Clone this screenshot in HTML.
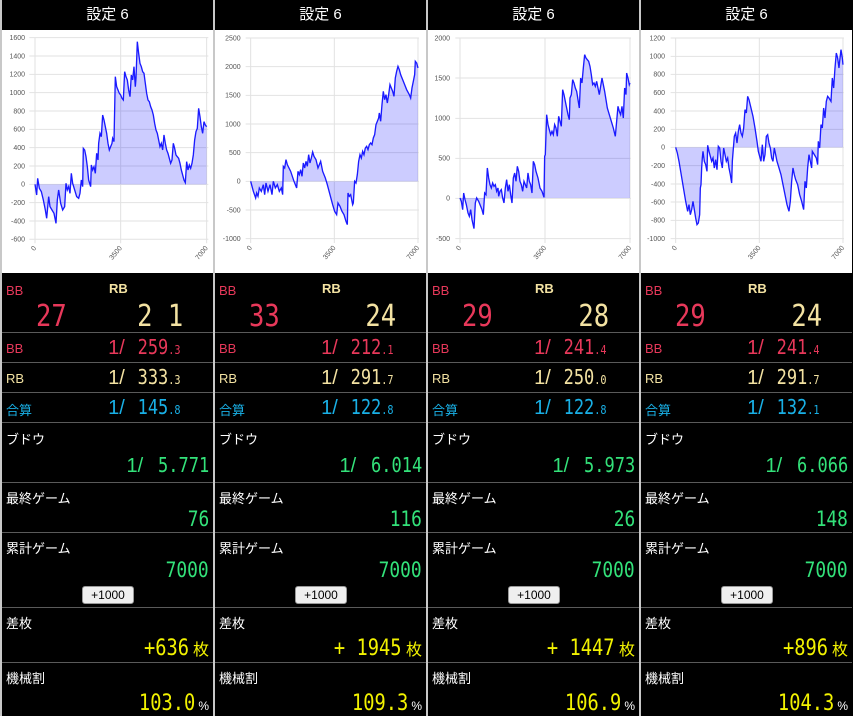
<!DOCTYPE html>
<html><head><meta charset="utf-8"><style>
*{margin:0;padding:0;box-sizing:border-box}
body{width:853px;height:716px;background:#c8c8c8;position:relative;overflow:hidden;font-family:"Liberation Sans","Noto Sans CJK JP",sans-serif}
.col{position:absolute;top:0;width:211px;height:716px;background:#000;color:#fff}
.hd{position:absolute;top:0;left:0;width:211px;height:30px;line-height:30px;text-align:center;font-size:15px}
svg.ch{position:absolute;top:30px;left:0;width:211px;height:243px;background:#fff}
.r{position:absolute;left:0;width:211px;border-top:1px solid #5a5a5a}
.lb{position:absolute;left:4px;font-size:13px}
.d{font-family:"DejaVu Sans Mono","Liberation Mono",monospace;display:inline-block;transform:scaleX(.85);transform-origin:right}
.v{position:absolute;right:4px;white-space:nowrap}
.red{color:#e8385a}.bei{color:#f3e2a2}.cy{color:#19b0e6}.gr{color:#33e27a}.ye{color:#f2f200}
.btn{position:absolute;left:80px;width:52px;height:18px;background:#efefef;border:1px solid #999;border-radius:3px;color:#000;font-size:12px;text-align:center;line-height:16px}
</style></head><body>

<!-- Column template builder -->
<div class="col" style="left:2px">
<div class="hd">設定 6</div>
<svg class="ch" viewBox="2 30 211 243">
<g transform="translate(0,0) scale(0.3333)" font-family="Liberation Sans,sans-serif" font-size="21" fill="#555">
<g stroke="#e2e2e2" stroke-width="3">
<line x1="88" x2="625" y1="113" y2="113"/><line x1="88" x2="625" y1="168" y2="168"/><line x1="88" x2="625" y1="223" y2="223"/><line x1="88" x2="625" y1="278" y2="278"/><line x1="88" x2="625" y1="333" y2="333"/><line x1="88" x2="625" y1="388" y2="388"/><line x1="88" x2="625" y1="443" y2="443"/><line x1="88" x2="625" y1="498" y2="498"/><line x1="88" x2="625" y1="553" y2="553"/><line x1="88" x2="625" y1="608" y2="608"/><line x1="88" x2="625" y1="663" y2="663"/><line x1="88" x2="625" y1="718" y2="718"/>
<line x1="105" x2="105" y1="113" y2="730"/><line x1="362" x2="362" y1="113" y2="730"/><line x1="620" x2="620" y1="113" y2="730"/></g>
<g text-anchor="end"><text x="75" y="120">1600</text><text x="75" y="175">1400</text><text x="75" y="230">1200</text><text x="75" y="285">1000</text><text x="75" y="340">800</text><text x="75" y="395">600</text><text x="75" y="450">400</text><text x="75" y="505">200</text><text x="75" y="560">0</text><text x="75" y="615">-200</text><text x="75" y="670">-400</text><text x="75" y="725">-600</text>
<text transform="translate(110,745) rotate(-50)">0</text><text transform="translate(367,745) rotate(-50)">3500</text><text transform="translate(625,745) rotate(-50)">7000</text></g>
<polygon fill="rgba(0,0,255,0.2)" points="105,553 110,585 113,535 118,565 124,575 130,600 136,630 140,655 146,590 150,620 156,630 162,640 168,670 172,600 176,570 182,610 188,630 194,620 198,550 202,570 206,560 210,580 214,520 218,550 224,570 230,590 236,595 240,580 244,540 248,560 250,445 254,450 258,470 262,500 266,540 272,560 274,495 278,510 282,500 286,520 290,460 294,480 296,430 300,400 304,410 308,345 312,360 316,380 320,400 324,430 328,450 332,440 336,430 338,415 342,425 346,230 350,260 354,270 358,280 362,285 366,295 370,300 374,215 378,230 382,240 386,270 390,290 394,225 398,240 402,200 406,260 408,235 412,125 416,160 420,190 424,200 428,215 432,220 436,250 440,280 444,300 448,305 452,320 456,330 460,345 464,370 468,390 472,400 476,420 480,440 484,430 488,450 492,405 496,430 500,450 504,460 508,475 512,490 516,480 520,430 524,445 528,465 532,470 536,475 540,490 544,510 548,525 552,540 556,548 560,485 564,510 568,495 572,505 576,490 580,465 584,420 588,395 592,385 596,325 600,350 604,380 608,400 612,365 616,375 620,380 620,553"/>
<polyline fill="none" stroke="#1a1aff" stroke-width="4" points="105,553 110,585 113,535 118,565 124,575 130,600 136,630 140,655 146,590 150,620 156,630 162,640 168,670 172,600 176,570 182,610 188,630 194,620 198,550 202,570 206,560 210,580 214,520 218,550 224,570 230,590 236,595 240,580 244,540 248,560 250,445 254,450 258,470 262,500 266,540 272,560 274,495 278,510 282,500 286,520 290,460 294,480 296,430 300,400 304,410 308,345 312,360 316,380 320,400 324,430 328,450 332,440 336,430 338,415 342,425 346,230 350,260 354,270 358,280 362,285 366,295 370,300 374,215 378,230 382,240 386,270 390,290 394,225 398,240 402,200 406,260 408,235 412,125 416,160 420,190 424,200 428,215 432,220 436,250 440,280 444,300 448,305 452,320 456,330 460,345 464,370 468,390 472,400 476,420 480,440 484,430 488,450 492,405 496,430 500,450 504,460 508,475 512,490 516,480 520,430 524,445 528,465 532,470 536,475 540,490 544,510 548,525 552,540 556,548 560,485 564,510 568,495 572,505 576,490 580,465 584,420 588,395 592,385 596,325 600,350 604,380 608,400 612,365 616,375 620,380"/>
</g></svg>
<div class="r" style="top:273px;height:59px;border-top:none"><span class="lb red" style="top:10px">BB</span><span class="lb bei" style="top:8px;left:107px;font-weight:bold">RB</span>
<span class="v red" style="left:34px;right:auto;top:26px;font-size:30px"><span class="d" style="transform-origin:left">27</span></span><span class="v bei" style="right:30px;top:26px;font-size:30px"><span class="d">2 1</span></span></div>
<div class="r" style="top:332px;height:30px"><span class="lb red" style="top:8px">BB</span><span class="v red" style="right:32px;top:2px;font-size:20px">1/ <span class="d">259<small style="font-size:12px">.3</small></span></span></div>
<div class="r bei" style="top:362px;height:30px"><span class="lb" style="top:8px">RB</span><span class="v" style="right:32px;top:2px;font-size:20px">1/ <span class="d">333<small style="font-size:12px">.3</small></span></span></div>
<div class="r cy" style="top:392px;height:30px"><span class="lb" style="top:7px">合算</span><span class="v" style="right:32px;top:2px;font-size:20px">1/ <span class="d">145<small style="font-size:12px">.8</small></span></span></div>
<div class="r" style="top:422px;height:60px"><span class="lb" style="top:6px">ブドウ</span><span class="v gr" style="top:30px;font-size:20px">1/ <span class="d">5.771</span></span></div>
<div class="r" style="top:482px;height:50px"><span class="lb" style="top:5px">最終ゲーム</span><span class="v gr" style="top:24px;font-size:21px"><span class="d">76</span></span></div>
<div class="r" style="top:532px;height:75px"><span class="lb" style="top:5px">累計ゲーム</span><span class="v gr" style="top:25px;font-size:21px"><span class="d">7000</span></span><div class="btn" style="top:53px">+1000</div></div>
<div class="r" style="top:607px;height:55px"><span class="lb" style="top:5px">差枚</span><span class="v ye" style="top:27px;font-size:22px"><span class="d">+636</span><span style="font-size:16px"> 枚</span></span></div>
<div class="r" style="top:662px;height:54px"><span class="lb" style="top:5px">機械割</span><span class="v ye" style="top:27px;font-size:22px"><span class="d">103.0</span><span style="font-size:12px;color:#fff"> %</span></span></div>
</div>

<div class="col" style="left:215px">
<div class="hd">設定 6</div>
<svg class="ch" viewBox="215 30 211 243">
<g transform="translate(214,28) scale(0.3333)" font-family="Liberation Sans,sans-serif" font-size="21" fill="#555">
<g stroke="#e2e2e2" stroke-width="3">
<line x1="95" x2="615" y1="30" y2="30"/><line x1="95" x2="615" y1="116" y2="116"/><line x1="95" x2="615" y1="202" y2="202"/><line x1="95" x2="615" y1="288" y2="288"/><line x1="95" x2="615" y1="374" y2="374"/><line x1="95" x2="615" y1="460" y2="460"/><line x1="95" x2="615" y1="546" y2="546"/><line x1="95" x2="615" y1="632" y2="632"/>
<line x1="110" x2="110" y1="30" y2="645"/><line x1="361" x2="361" y1="30" y2="645"/><line x1="612" x2="612" y1="30" y2="645"/></g>
<g text-anchor="end"><text x="80" y="37">2500</text><text x="80" y="123">2000</text><text x="80" y="209">1500</text><text x="80" y="295">1000</text><text x="80" y="381">500</text><text x="80" y="467">0</text><text x="80" y="553">-500</text><text x="80" y="639">-1000</text>
<text transform="translate(115,660) rotate(-50)">0</text><text transform="translate(366,660) rotate(-50)">3500</text><text transform="translate(617,660) rotate(-50)">7000</text></g>
<polygon fill="rgba(0,0,255,0.2)" points="110,460 118,490 125,510 128,495 132,505 136,480 142,490 148,470 152,500 156,465 162,490 168,470 174,500 178,460 184,480 190,470 196,490 202,480 206,500 208,415 212,420 216,395 220,410 230,430 240,460 248,480 252,430 256,440 260,425 264,445 268,405 272,420 276,400 280,415 284,380 288,405 292,390 296,372 300,385 306,395 312,420 316,410 320,400 326,430 334,450 340,470 348,500 356,530 362,550 368,560 372,525 378,535 384,550 390,560 396,580 400,590 402,495 406,505 410,500 416,530 418,525 422,460 426,465 430,440 434,400 438,380 442,390 446,370 450,380 454,360 458,355 462,365 466,350 470,345 474,350 478,330 482,320 486,290 490,280 494,270 496,255 500,280 504,230 508,190 512,215 516,200 520,225 524,200 528,170 532,180 536,190 540,205 544,150 548,130 552,115 556,125 560,140 566,155 572,170 578,185 586,200 590,210 594,180 598,160 602,140 604,100 608,105 612,120 612,460"/>
<polyline fill="none" stroke="#1a1aff" stroke-width="4" points="110,460 118,490 125,510 128,495 132,505 136,480 142,490 148,470 152,500 156,465 162,490 168,470 174,500 178,460 184,480 190,470 196,490 202,480 206,500 208,415 212,420 216,395 220,410 230,430 240,460 248,480 252,430 256,440 260,425 264,445 268,405 272,420 276,400 280,415 284,380 288,405 292,390 296,372 300,385 306,395 312,420 316,410 320,400 326,430 334,450 340,470 348,500 356,530 362,550 368,560 372,525 378,535 384,550 390,560 396,580 400,590 402,495 406,505 410,500 416,530 418,525 422,460 426,465 430,440 434,400 438,380 442,390 446,370 450,380 454,360 458,355 462,365 466,350 470,345 474,350 478,330 482,320 486,290 490,280 494,270 496,255 500,280 504,230 508,190 512,215 516,200 520,225 524,200 528,170 532,180 536,190 540,205 544,150 548,130 552,115 556,125 560,140 566,155 572,170 578,185 586,200 590,210 594,180 598,160 602,140 604,100 608,105 612,120"/>
</g></svg>
<div class="r" style="top:273px;height:59px;border-top:none"><span class="lb red" style="top:10px">BB</span><span class="lb bei" style="top:8px;left:107px;font-weight:bold">RB</span>
<span class="v red" style="left:34px;right:auto;top:26px;font-size:30px"><span class="d" style="transform-origin:left">33</span></span><span class="v bei" style="right:30px;top:26px;font-size:30px"><span class="d">24</span></span></div>
<div class="r" style="top:332px;height:30px"><span class="lb red" style="top:8px">BB</span><span class="v red" style="right:32px;top:2px;font-size:20px">1/ <span class="d">212<small style="font-size:12px">.1</small></span></span></div>
<div class="r bei" style="top:362px;height:30px"><span class="lb" style="top:8px">RB</span><span class="v" style="right:32px;top:2px;font-size:20px">1/ <span class="d">291<small style="font-size:12px">.7</small></span></span></div>
<div class="r cy" style="top:392px;height:30px"><span class="lb" style="top:7px">合算</span><span class="v" style="right:32px;top:2px;font-size:20px">1/ <span class="d">122<small style="font-size:12px">.8</small></span></span></div>
<div class="r" style="top:422px;height:60px"><span class="lb" style="top:6px">ブドウ</span><span class="v gr" style="top:30px;font-size:20px">1/ <span class="d">6.014</span></span></div>
<div class="r" style="top:482px;height:50px"><span class="lb" style="top:5px">最終ゲーム</span><span class="v gr" style="top:24px;font-size:21px"><span class="d">116</span></span></div>
<div class="r" style="top:532px;height:75px"><span class="lb" style="top:5px">累計ゲーム</span><span class="v gr" style="top:25px;font-size:21px"><span class="d">7000</span></span><div class="btn" style="top:53px">+1000</div></div>
<div class="r" style="top:607px;height:55px"><span class="lb" style="top:5px">差枚</span><span class="v ye" style="top:27px;font-size:22px"><span class="d">+ 1945</span><span style="font-size:16px"> 枚</span></span></div>
<div class="r" style="top:662px;height:54px"><span class="lb" style="top:5px">機械割</span><span class="v ye" style="top:27px;font-size:22px"><span class="d">109.3</span><span style="font-size:12px;color:#fff"> %</span></span></div>
</div>

<div class="col" style="left:428px">
<div class="hd">設定 6</div>
<svg class="ch" viewBox="428 30 211 243">
<g transform="translate(426,28) scale(0.3333)" font-family="Liberation Sans,sans-serif" font-size="21" fill="#555">
<g stroke="#e2e2e2" stroke-width="3">
<line x1="88" x2="615" y1="30" y2="30"/><line x1="88" x2="615" y1="150" y2="150"/><line x1="88" x2="615" y1="271" y2="271"/><line x1="88" x2="615" y1="391" y2="391"/><line x1="88" x2="615" y1="511" y2="511"/><line x1="88" x2="615" y1="632" y2="632"/>
<line x1="102" x2="102" y1="30" y2="645"/><line x1="357" x2="357" y1="30" y2="645"/><line x1="612" x2="612" y1="30" y2="645"/></g>
<g text-anchor="end"><text x="72" y="37">2000</text><text x="72" y="157">1500</text><text x="72" y="278">1000</text><text x="72" y="398">500</text><text x="72" y="518">0</text><text x="72" y="639">-500</text>
<text transform="translate(107,660) rotate(-50)">0</text><text transform="translate(362,660) rotate(-50)">3500</text><text transform="translate(617,660) rotate(-50)">7000</text></g>
<polygon fill="rgba(0,0,255,0.2)" points="102,510 106,520 110,545 113,495 117,515 121,530 126,555 130,565 134,545 138,575 144,602 148,525 152,510 158,520 162,530 168,545 172,560 176,495 180,500 184,420 188,450 192,470 196,480 200,465 204,475 208,470 212,490 216,480 218,505 222,490 226,485 230,510 234,525 238,480 242,455 246,490 250,470 254,500 258,525 262,450 266,435 270,460 274,415 278,430 282,460 286,470 290,490 294,460 298,470 302,480 306,435 310,460 314,470 318,495 322,400 326,410 330,430 336,450 342,480 348,490 354,508 356,385 358,380 362,260 366,290 370,305 374,320 378,310 382,320 386,290 390,300 394,325 398,265 402,280 406,295 410,185 414,200 418,220 422,240 426,260 430,275 432,210 436,200 440,155 444,165 448,180 452,190 456,215 460,240 464,150 468,165 472,120 476,80 480,90 484,95 488,100 492,115 496,140 500,170 504,165 508,175 512,160 516,180 520,200 524,175 528,150 532,170 536,190 540,215 544,240 550,260 556,280 562,300 568,325 572,280 576,235 580,250 584,260 588,235 592,270 596,180 600,200 602,135 606,150 610,170 612,165 612,510"/>
<polyline fill="none" stroke="#1a1aff" stroke-width="4" points="102,510 106,520 110,545 113,495 117,515 121,530 126,555 130,565 134,545 138,575 144,602 148,525 152,510 158,520 162,530 168,545 172,560 176,495 180,500 184,420 188,450 192,470 196,480 200,465 204,475 208,470 212,490 216,480 218,505 222,490 226,485 230,510 234,525 238,480 242,455 246,490 250,470 254,500 258,525 262,450 266,435 270,460 274,415 278,430 282,460 286,470 290,490 294,460 298,470 302,480 306,435 310,460 314,470 318,495 322,400 326,410 330,430 336,450 342,480 348,490 354,508 356,385 358,380 362,260 366,290 370,305 374,320 378,310 382,320 386,290 390,300 394,325 398,265 402,280 406,295 410,185 414,200 418,220 422,240 426,260 430,275 432,210 436,200 440,155 444,165 448,180 452,190 456,215 460,240 464,150 468,165 472,120 476,80 480,90 484,95 488,100 492,115 496,140 500,170 504,165 508,175 512,160 516,180 520,200 524,175 528,150 532,170 536,190 540,215 544,240 550,260 556,280 562,300 568,325 572,280 576,235 580,250 584,260 588,235 592,270 596,180 600,200 602,135 606,150 610,170 612,165"/>
</g></svg>
<div class="r" style="top:273px;height:59px;border-top:none"><span class="lb red" style="top:10px">BB</span><span class="lb bei" style="top:8px;left:107px;font-weight:bold">RB</span>
<span class="v red" style="left:34px;right:auto;top:26px;font-size:30px"><span class="d" style="transform-origin:left">29</span></span><span class="v bei" style="right:30px;top:26px;font-size:30px"><span class="d">28</span></span></div>
<div class="r" style="top:332px;height:30px"><span class="lb red" style="top:8px">BB</span><span class="v red" style="right:32px;top:2px;font-size:20px">1/ <span class="d">241<small style="font-size:12px">.4</small></span></span></div>
<div class="r bei" style="top:362px;height:30px"><span class="lb" style="top:8px">RB</span><span class="v" style="right:32px;top:2px;font-size:20px">1/ <span class="d">250<small style="font-size:12px">.0</small></span></span></div>
<div class="r cy" style="top:392px;height:30px"><span class="lb" style="top:7px">合算</span><span class="v" style="right:32px;top:2px;font-size:20px">1/ <span class="d">122<small style="font-size:12px">.8</small></span></span></div>
<div class="r" style="top:422px;height:60px"><span class="lb" style="top:6px">ブドウ</span><span class="v gr" style="top:30px;font-size:20px">1/ <span class="d">5.973</span></span></div>
<div class="r" style="top:482px;height:50px"><span class="lb" style="top:5px">最終ゲーム</span><span class="v gr" style="top:24px;font-size:21px"><span class="d">26</span></span></div>
<div class="r" style="top:532px;height:75px"><span class="lb" style="top:5px">累計ゲーム</span><span class="v gr" style="top:25px;font-size:21px"><span class="d">7000</span></span><div class="btn" style="top:53px">+1000</div></div>
<div class="r" style="top:607px;height:55px"><span class="lb" style="top:5px">差枚</span><span class="v ye" style="top:27px;font-size:22px"><span class="d">+ 1447</span><span style="font-size:16px"> 枚</span></span></div>
<div class="r" style="top:662px;height:54px"><span class="lb" style="top:5px">機械割</span><span class="v ye" style="top:27px;font-size:22px"><span class="d">106.9</span><span style="font-size:12px;color:#fff"> %</span></span></div>
</div>

<div class="col" style="left:641px;width:212px">
<div class="hd">設定 6</div>
<svg class="ch" viewBox="641 30 211 243">
<g transform="translate(639,28) scale(0.3333)" font-family="Liberation Sans,sans-serif" font-size="21" fill="#555">
<g stroke="#e2e2e2" stroke-width="3">
<line x1="95" x2="615" y1="30" y2="30"/><line x1="95" x2="615" y1="85" y2="85"/><line x1="95" x2="615" y1="139" y2="139"/><line x1="95" x2="615" y1="194" y2="194"/><line x1="95" x2="615" y1="249" y2="249"/><line x1="95" x2="615" y1="304" y2="304"/><line x1="95" x2="615" y1="358" y2="358"/><line x1="95" x2="615" y1="413" y2="413"/><line x1="95" x2="615" y1="468" y2="468"/><line x1="95" x2="615" y1="522" y2="522"/><line x1="95" x2="615" y1="577" y2="577"/><line x1="95" x2="615" y1="632" y2="632"/>
<line x1="110" x2="110" y1="30" y2="645"/><line x1="361" x2="361" y1="30" y2="645"/><line x1="612" x2="612" y1="30" y2="645"/></g>
<g text-anchor="end"><text x="78" y="37">1200</text><text x="78" y="92">1000</text><text x="78" y="146">800</text><text x="78" y="201">600</text><text x="78" y="256">400</text><text x="78" y="311">200</text><text x="78" y="365">0</text><text x="78" y="420">-200</text><text x="78" y="475">-400</text><text x="78" y="529">-600</text><text x="78" y="584">-800</text><text x="78" y="639">-1000</text>
<text transform="translate(115,660) rotate(-50)">0</text><text transform="translate(366,660) rotate(-50)">3500</text><text transform="translate(617,660) rotate(-50)">7000</text></g>
<polygon fill="rgba(0,0,255,0.2)" points="110,358 115,375 120,400 125,430 130,460 135,490 140,520 146,550 150,530 154,560 158,545 162,520 166,545 170,570 174,590 178,585 182,560 184,480 186,470 188,420 190,390 192,370 196,400 200,410 204,430 206,352 210,370 214,385 218,400 222,390 226,420 230,395 234,425 238,355 242,360 246,400 250,420 254,360 258,380 262,400 266,390 270,420 274,440 278,465 280,400 282,375 286,325 290,315 294,345 298,310 302,290 306,315 310,325 314,300 318,245 322,255 326,205 330,215 336,240 342,265 348,300 354,340 358,370 362,385 366,400 370,350 374,400 378,380 382,325 386,320 390,345 394,360 398,390 402,400 406,360 410,380 414,400 420,420 426,440 432,470 438,500 444,530 450,550 454,520 458,460 462,420 466,440 470,455 476,470 482,500 488,520 494,545 498,460 502,480 506,420 510,380 514,400 518,420 520,370 526,380 532,390 536,410 538,340 542,360 546,290 550,300 554,240 558,270 562,220 566,205 570,210 576,220 580,150 584,180 588,120 592,75 596,90 600,120 602,100 606,65 610,90 612,110 612,358"/>
<polyline fill="none" stroke="#1a1aff" stroke-width="4" points="110,358 115,375 120,400 125,430 130,460 135,490 140,520 146,550 150,530 154,560 158,545 162,520 166,545 170,570 174,590 178,585 182,560 184,480 186,470 188,420 190,390 192,370 196,400 200,410 204,430 206,352 210,370 214,385 218,400 222,390 226,420 230,395 234,425 238,355 242,360 246,400 250,420 254,360 258,380 262,400 266,390 270,420 274,440 278,465 280,400 282,375 286,325 290,315 294,345 298,310 302,290 306,315 310,325 314,300 318,245 322,255 326,205 330,215 336,240 342,265 348,300 354,340 358,370 362,385 366,400 370,350 374,400 378,380 382,325 386,320 390,345 394,360 398,390 402,400 406,360 410,380 414,400 420,420 426,440 432,470 438,500 444,530 450,550 454,520 458,460 462,420 466,440 470,455 476,470 482,500 488,520 494,545 498,460 502,480 506,420 510,380 514,400 518,420 520,370 526,380 532,390 536,410 538,340 542,360 546,290 550,300 554,240 558,270 562,220 566,205 570,210 576,220 580,150 584,180 588,120 592,75 596,90 600,120 602,100 606,65 610,90 612,110"/>
</g></svg>
<div class="r" style="top:273px;height:59px;border-top:none"><span class="lb red" style="top:10px">BB</span><span class="lb bei" style="top:8px;left:107px;font-weight:bold">RB</span>
<span class="v red" style="left:34px;right:auto;top:26px;font-size:30px"><span class="d" style="transform-origin:left">29</span></span><span class="v bei" style="right:30px;top:26px;font-size:30px"><span class="d">24</span></span></div>
<div class="r" style="top:332px;height:30px"><span class="lb red" style="top:8px">BB</span><span class="v red" style="right:32px;top:2px;font-size:20px">1/ <span class="d">241<small style="font-size:12px">.4</small></span></span></div>
<div class="r bei" style="top:362px;height:30px"><span class="lb" style="top:8px">RB</span><span class="v" style="right:32px;top:2px;font-size:20px">1/ <span class="d">291<small style="font-size:12px">.7</small></span></span></div>
<div class="r cy" style="top:392px;height:30px"><span class="lb" style="top:7px">合算</span><span class="v" style="right:32px;top:2px;font-size:20px">1/ <span class="d">132<small style="font-size:12px">.1</small></span></span></div>
<div class="r" style="top:422px;height:60px"><span class="lb" style="top:6px">ブドウ</span><span class="v gr" style="top:30px;font-size:20px">1/ <span class="d">6.066</span></span></div>
<div class="r" style="top:482px;height:50px"><span class="lb" style="top:5px">最終ゲーム</span><span class="v gr" style="top:24px;font-size:21px"><span class="d">148</span></span></div>
<div class="r" style="top:532px;height:75px"><span class="lb" style="top:5px">累計ゲーム</span><span class="v gr" style="top:25px;font-size:21px"><span class="d">7000</span></span><div class="btn" style="top:53px">+1000</div></div>
<div class="r" style="top:607px;height:55px"><span class="lb" style="top:5px">差枚</span><span class="v ye" style="top:27px;font-size:22px"><span class="d">+896</span><span style="font-size:16px"> 枚</span></span></div>
<div class="r" style="top:662px;height:54px"><span class="lb" style="top:5px">機械割</span><span class="v ye" style="top:27px;font-size:22px"><span class="d">104.3</span><span style="font-size:12px;color:#fff"> %</span></span></div>
</div>

</body></html>
